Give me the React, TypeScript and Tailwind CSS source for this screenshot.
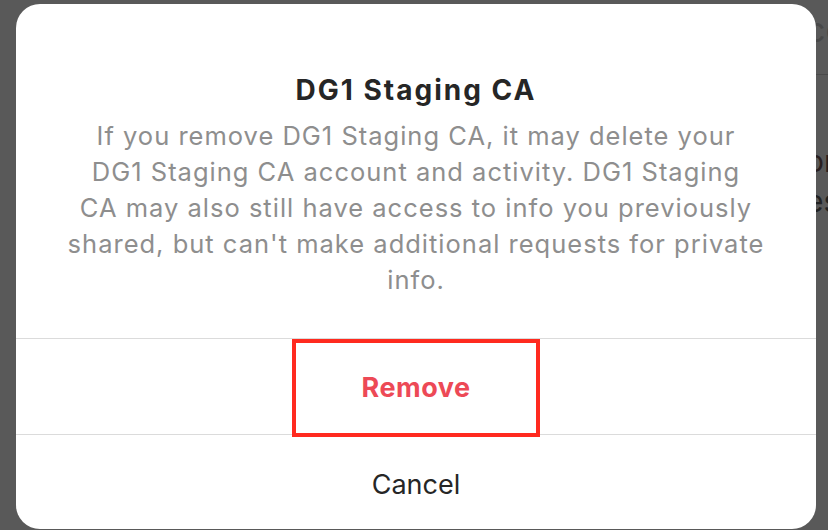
import React from 'react';

export default function App() {
  return (
    <div className="relative w-[828px] h-[530px] overflow-hidden bg-[#595959] font-['Inter','Liberation_Sans',Arial,sans-serif]">
      {/* dimmed page content peeking out at the right edge */}
      <div className="absolute left-[806px] top-0 w-[60px] text-[#3f3f3f]">
        <div className="mt-[10px] text-[34px] leading-[40px] text-[#484848]">co</div>
        <div className="mt-[24px] h-px bg-[#4a4a4a]" />
        <div className="mt-[68px] text-[30px] leading-[36px] text-[#2a1f1f]">on</div>
        <div className="mt-[4px] text-[30px] leading-[36px] text-[#222]">es</div>
      </div>

      <div className="relative ml-[16px] mt-[4px] w-[800px] h-[525px] rounded-[24px] bg-white flex flex-col">
        <div className="h-[334px] pt-[68px] px-[40px] text-center">
          <h2 className="text-[28px] leading-[36px] font-bold tracking-[2px] text-[#262626]">DG1 Staging CA</h2>
          <p className="mt-[10px] text-[25.5px] leading-[36px] tracking-[1px] text-[#8e8e8e]">
            If you remove DG1 Staging CA, it may delete your
            <br />
            DG1 Staging CA account and activity. DG1 Staging
            <br />
            CA may also still have access to info you previously
            <br />
            shared, but can't make additional requests for private
            <br />
            info.
          </p>
        </div>
        <div className="border-t border-[#dbdbdb] h-[96px] pt-[4px] flex items-center justify-center">
          <button className="text-[27px] font-bold tracking-[0.5px] text-[#ed4956]">Remove</button>
        </div>
        <div className="border-t border-[#dbdbdb] flex-1 pt-[6px] flex items-center justify-center">
          <button className="text-[27px] text-[#262626]">Cancel</button>
        </div>

        {/* highlight annotation around the Remove action */}
        <div className="absolute left-[276px] top-[335px] w-[248px] h-[98px] border-4 border-[#ff2a1f]" />
      </div>
    </div>
  );
}
